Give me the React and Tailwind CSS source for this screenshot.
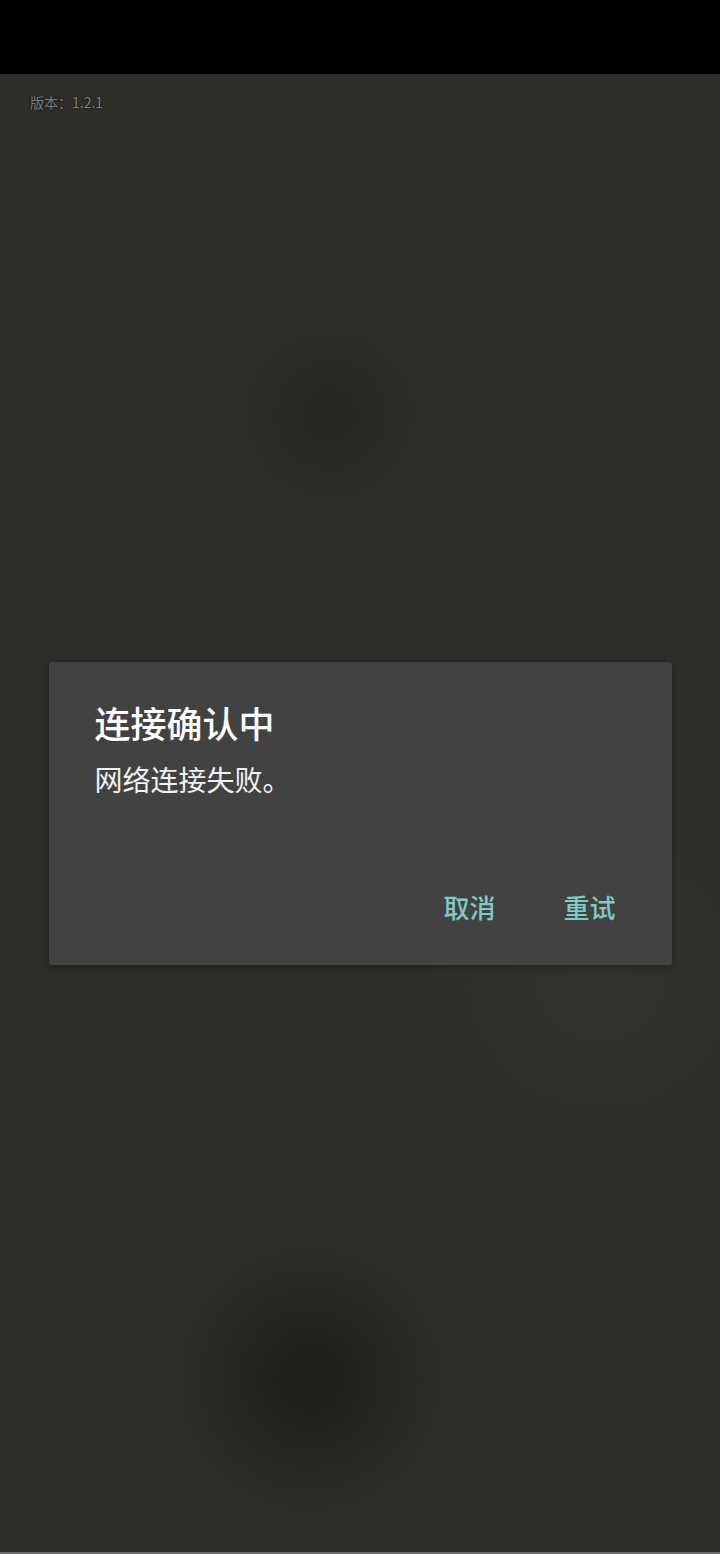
export default function App() {
  return (
    <div
      className="w-[720px] h-[1554px] flex flex-col bg-[#2e2d29] overflow-hidden"
      style={{ fontFamily: '"Noto Sans CJK SC", "Noto Sans", sans-serif' }}
    >
      <div className="h-[74px] bg-black shrink-0" />
      <div className="flex-1 flex flex-col bg-[radial-gradient(circle_at_310px_1305px,#1f1d19_0px,#26241f_60px,transparent_150px),radial-gradient(circle_at_330px_340px,#272521_0px,transparent_110px),radial-gradient(circle_at_600px_900px,#34332f_0px,transparent_200px)]">
        <div className="pl-[30px] pt-[18px] text-[14px] leading-[20px] text-[#808080] [text-shadow:0_0_2px_#000]">
          版本：1.2.1
        </div>
        <div className="flex-1 flex items-start justify-center pt-[550px]">
          <div className="w-[623px] h-[303px] bg-[#424242] rounded-[3px] shadow-[0_2px_8px_rgba(0,0,0,0.35)] flex flex-col pl-[46px] pr-[56px]">
            <div className="pt-[38px] text-[36px] leading-[44px] font-medium text-white">
              连接确认中
            </div>
            <div className="pt-[15px] text-[28px] leading-[40px] text-[#f2f2f2]">
              网络连接失败。
            </div>
            <div className="flex justify-end gap-[68px] mt-[90px] text-[26px] leading-[36px] font-medium text-[#80cbc4]">
              <span>取消</span>
              <span>重试</span>
            </div>
          </div>
        </div>
        <div className="h-[2px] bg-[#6a6a66]" />
      </div>
    </div>
  );
}
